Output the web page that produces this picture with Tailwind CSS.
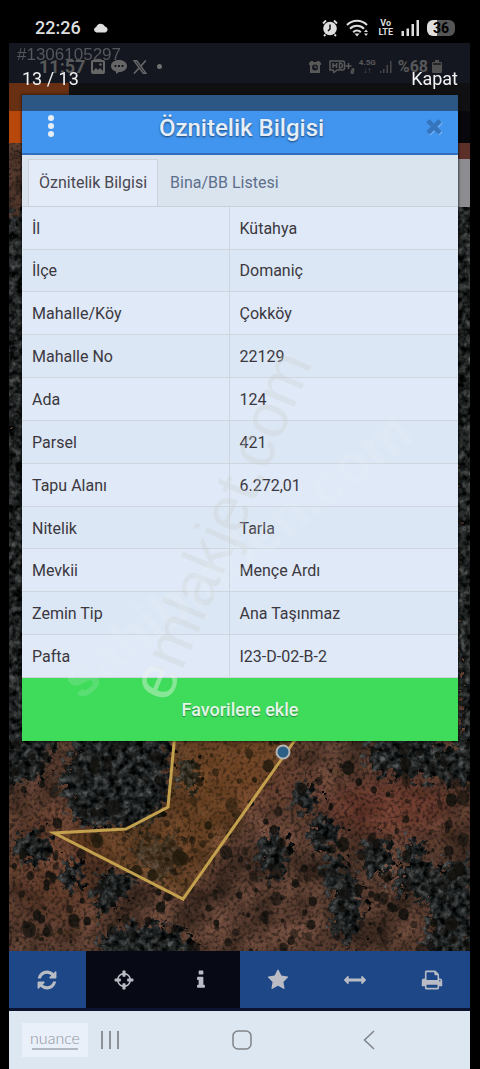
<!DOCTYPE html>
<html lang="tr">
<head>
  <meta charset="UTF-8" />
  <meta name="viewport" content="width=device-width, initial-scale=1.0"/>
  <title>Öznitelik Bilgisi</title>
  <script src="https://cdn.jsdelivr.net/npm/@tailwindcss/browser@4"></script>
</head>
<body class="bg-black min-h-screen flex flex-col font-[Roboto,sans-serif]">

  <!-- Durum çubuğu -->
  <header class="h-[43px] pt-3 pl-[35px] pr-[25px] flex items-center justify-between text-[#dedede]">
    <div class="flex items-center gap-3">
      <span class="text-lg leading-5 font-medium">22:26</span>
      <svg class="w-4 h-3" viewBox="0 0 16 12" fill="currentColor"><path d="M3.500 10.500a2.800 2.800 0 0 1-.3-5.500A4.700 4.700 0 0 1 12 4.500a3.100 3.100 0 0 1 .5 6z"/></svg>
    </div>
    <div class="flex items-center gap-2">
      <svg class="w-4 h-[18px]" viewBox="0 0 16 18"><circle cx="8" cy="9.500" r="6.800" fill="#dedede"/><path d="M1 4.500 4 1.500M15 4.500 12 1.500M3.500 15.500 2 17M12.500 15.500 14 17" stroke="#dedede" stroke-width="1.800" fill="none"/><path d="M8 5.500v4.500l-2 2" stroke="#111" stroke-width="1.500" fill="none"/></svg>
      <svg class="w-6 h-[18px]" viewBox="0 0 24 18" fill="none" stroke="#dedede" stroke-width="2"><path d="M1 6a14 14 0 0 1 20 0M4 9.800a9.800 9.800 0 0 1 14 0M7.200 13.200a5.300 5.300 0 0 1 7.600 0"/><path d="m8.500 14.500 2.500 3 2.500-3z" fill="#dedede" stroke="none"/><path d="m18 13 2-2.500 2 2.500zM18 14.500l2 2.500 2-2.500z" fill="#dedede" stroke="none"/></svg>
      <span class="text-[9px] leading-[9px] font-bold text-center">Vo<br>LTE</span>
      <svg class="w-[18px] h-[18px]" viewBox="0 0 18 18" fill="#dedede"><path d="M.500 12H3v5H.500zM5.500 9.500H8V17H5.500zM10.500 5H13v12h-2.500zM15.500 1H18v16h-2.500z"/></svg>
      <div class="w-7 h-4 rounded-md bg-gradient-to-r from-[#dedede] from-35% to-[#555] to-35% text-black text-sm leading-4 font-bold text-center">36</div>
    </div>
  </header>

  <main class="relative flex-1 flex flex-col ml-[9px] mr-[10px]">

    <!-- Alttaki ekranın durum çubuğu -->
    <div class="h-10 pt-[7px] pl-[30px] pr-7 flex items-center justify-between bg-[#101628] text-[#999]">
      <div class="flex items-center gap-[6px]">
        <span class="text-lg leading-5 font-bold">11:57</span>
        <svg class="w-[14px] h-[14px]" viewBox="0 0 14 14"><rect width="14" height="14" rx="2" fill="#b5b5b5"/><path d="m2 11 3-3 2 2 2-2 3 3V2H2z" fill="#161b2b"/><circle cx="9.500" cy="4.500" r="1.300" fill="#b5b5b5"/></svg>
        <svg class="w-4 h-[14px]" viewBox="0 0 16 14"><path d="M8 0c4.500 0 8 2.500 8 6s-3.500 6-8 6l-3 2v-2.500C2 10.700 0 8.800 0 6c0-3.500 3.500-6 8-6z" fill="#b5b5b5"/><path d="M3.500 5h2v2h-2zM7 5h2v2H7zM10.500 5h2v2h-2z" fill="#161b2b"/></svg>
        <svg class="w-[14px] h-[14px]" viewBox="0 0 14 14" fill="none" stroke="#b5b5b5"><path d="M1 .700h2.700L13 13.300h-2.700z" stroke-width="1.500"/><path d="M12.800.500 8 6M6 8l-5 5.500" stroke-width="1.700"/></svg>
        <span class="w-[5px] h-[5px] ml-1 rounded-full bg-[#c8c8c8]"></span>
      </div>
      <div class="flex items-center gap-1">
        <svg class="w-3 h-3" viewBox="0 0 12 12"><path d="M0 2 2 0h2v1h4V0h2l2 2v2h-1v8H1V4H0z" fill="#999"/><circle cx="6" cy="6.500" r="3" fill="#161b2b"/><path d="M6 4.500v2h2" stroke="#999" fill="none"/></svg>
        <svg class="w-[26px] h-[14px] ml-1" viewBox="0 0 26 14" fill="none" stroke="#999" stroke-width="1.500"><path d="M4 10H1V1h12.500q2 0 2 2v5q0 2-2 2H8l-3 2.500zM4 3v5M7.500 3v5M4 5.500h3.500M10.500 3v5h1.500q1.500-1 1.500-2.500T12 3zM16.500 6h6M19.500 3v6M22.500 9h2v2h-2v2h2.500"/></svg>
        <span class="text-[8px] leading-2 font-bold text-center">4.5G<br>↓↑</span>
        <svg class="w-3 h-3" viewBox="0 0 12 12" fill="#777"><path d="M0 10h1.500v2H0zM3 8h1.500v4H3zM6.500 4H8v8H6.500zM10 0h1.500v12H10z"/></svg>
        <span class="pl-[2px] text-base leading-5 font-bold">%68</span>
        <svg class="w-[10px] h-[13px]" viewBox="0 0 10 13" fill="#888"><path d="M3 0h4v2h2q1 0 1 1v9q0 1-1 1H1q-1 0-1-1V3q0-1 1-1h2z"/><path d="M1 3h8v2H1z" fill="#333"/></svg>
      </div>
    </div>

    <!-- Harita -->
    <section class="relative flex-1 bg-[#4b3226]">
      <svg class="absolute inset-0 w-full h-full" viewBox="0 0 461 868" preserveAspectRatio="xMidYMax slice">
        <defs>
          <filter id="soil" x="0" y="0" width="100%" height="100%" color-interpolation-filters="sRGB">
            <feTurbulence type="fractalNoise" baseFrequency="0.03" numOctaves="5" seed="4"/>
            <feColorMatrix values="0.45 0 0 0 0.12  0.3 0 0 0 0.085  0.25 0 0 0 0.06  0 0 0 0 1"/>
          </filter>
          <filter id="grain" x="0" y="0" width="100%" height="100%" color-interpolation-filters="sRGB">
            <feTurbulence type="fractalNoise" baseFrequency="0.28" numOctaves="2" seed="9"/>
            <feColorMatrix values="0 0 0 0 0.02  0 0 0 0 0.03  0 0 0 0 0.03  3.500 0 0 0 -1.600"/>
          </filter>
          <filter id="forest" x="-5%" y="-5%" width="110%" height="110%" color-interpolation-filters="sRGB">
            <feTurbulence type="fractalNoise" baseFrequency="0.14" numOctaves="3" seed="2" result="n"/>
            <feDisplacementMap in="SourceGraphic" in2="n" scale="36" xChannelSelector="R" yChannelSelector="G" result="shape"/>
            <feColorMatrix in="n" values="0.6 0 0 0 -0.16  0.6 0 0 0 -0.15  0.6 0 0 0 -0.15  0 0 0 0 1" result="leaf"/>
            <feComposite in="leaf" in2="shape" operator="in"/>
          </filter>
          <filter id="soft"><feGaussianBlur stdDeviation="12"/></filter>
        </defs>
        <rect width="461" height="868" filter="url(#soil)"/>
        <g filter="url(#soft)">
          <path d="M170 650h120L180 800 60 755l60-5 45-25z" fill="#784418" opacity=".35"/>
          <ellipse cx="380" cy="725" rx="65" ry="28" fill="#7c3a29" opacity=".5"/>
          <ellipse cx="50" cy="780" rx="50" ry="60" fill="#703c2a" opacity=".4"/>
          <ellipse cx="260" cy="700" rx="55" ry="30" fill="#78432d" opacity=".4"/>
        </g>
        <g filter="url(#forest)">
          <path d="M-10 130H40V630L0 700H-10zM70 650h90v60l-20 35-60 0-15-10-15-35zM0 655l50-5-20 45-40 10z"/>
          <path d="M90 788l30 0 10 10-15 18-15 14-18-5z"/>
          <path d="M92 850l30-10 50 5 20 30H92zM420 790l45-20v110h-50l5-40z"/>
          <path d="M435 80H480V720L450 700zM355 665l30-15 50 10 30 20v20l-60-5-45-5zM390 780l35 0 15 25-25 15-30-10z"/>
          <path d="M128 755l40-5 10 30-25 20-28-25z" opacity=".6"/>
          <ellipse cx="337" cy="826" rx="17" ry="34"/><ellipse cx="264" cy="771" rx="17" ry="22"/>
          <ellipse cx="325" cy="790" rx="12" ry="17"/><ellipse cx="368" cy="775" rx="17" ry="20"/>
          <ellipse cx="296" cy="715" rx="12" ry="16"/><ellipse cx="180" cy="690" rx="10" ry="18"/>
          <ellipse cx="24" cy="765" rx="20" ry="17"/><ellipse cx="64" cy="792" rx="12" ry="16"/>
          <ellipse cx="315" cy="750" rx="16" ry="18"/><ellipse cx="405" cy="770" rx="11" ry="17"/>
        </g>
        <g id="shrubs" fill="#15130f"></g>
        <rect width="461" height="868" filter="url(#grain)" opacity=".5"/>
        <path d="M169 640 159 724 117 746 45 750 174 816 292 650V640z" fill="#a86a10" fill-opacity=".12"/>
        <path d="M166 650 159 724 117 746 45 750 174 816 291 650" fill="none" stroke="#c3a04e" stroke-width="3"/>
        <circle cx="274" cy="669" r="6.500" fill="#2c5f86" stroke="#b5b5b5" stroke-width="2"/>
      </svg>

      <!-- Uygulama başlığı ve logo karesi -->
      <div class="absolute inset-x-0 top-0 h-[60px] bg-[#08080c]"></div>
      <div class="absolute left-0 top-0 w-[60px] h-[60px] bg-[#b8470c]"></div>
      <div class="absolute right-0 top-[60px] w-4 h-4 bg-[#5c3029]"></div>
      <div class="absolute right-0 top-[76px] w-4 h-12 bg-[#8d8c90]"></div>

      <!-- Öznitelik penceresi -->
      <div class="relative mt-3 ml-[13px] mr-3 bg-[#dfe9f6] shadow-[0_0_2px_1px_#0008] overflow-hidden">
        <div class="h-[60px] pt-1 px-5 flex items-center justify-between bg-[#4195ee] border-b-2 border-[#2f6fbd]">
          <button class="w-[18px] h-6 flex flex-col items-center justify-center gap-[2px]" aria-label="Menü">
            <span class="w-[6px] h-[6px] rounded-full bg-[#e8eef6]"></span>
            <span class="w-[6px] h-[6px] rounded-full bg-[#e8eef6]"></span>
            <span class="w-[6px] h-[6px] rounded-full bg-[#e8eef6]"></span>
          </button>
          <h1 class="pt-1 text-2xl leading-7 font-medium text-[#e6eef8] [text-shadow:0_1px_2px_#1c4272]">Öznitelik Bilgisi</h1>
          <button class="-mr-[7px]" aria-label="Pencereyi kapat">
            <svg class="w-[22px] h-[22px] drop-shadow-[1px_1px_0_#6fb0f5]" viewBox="0 0 1792 1792" fill="#3475bd"><path d="M1490 1322q0 40-28 68l-136 136q-28 28-68 28t-68-28l-294-294-294 294q-28 28-68 28t-68-28l-136-136q-28-28-28-68t28-68l294-294-294-294q-28-28-28-68t28-68l136-136q28-28 68-28t68 28l294 294 294-294q28-28 68-28t68 28l136 136q28 28 28 68t-28 68l-294 294 294 294q28 28 28 68z"/></svg>
          </button>
        </div>

        <div class="h-[52px] pt-1 pl-[6px] flex bg-[#dae4ef] border-b border-[#c8d0da] text-base" role="tablist">
          <button class="px-[10px] bg-[#e2ebf7] border-x border-t border-[#cdd4dd] text-[#4a4650]" role="tab" aria-selected="true">Öznitelik Bilgisi</button>
          <button class="px-3 text-[#5d6f8b]" role="tab" aria-selected="false">Bina/BB Listesi</button>
        </div>

        <table class="w-full h-[471px] text-base text-[#3b3840] text-left border-collapse">
          <tbody id="attributes"></tbody>
        </table>

        <button class="block w-full h-[63px] bg-[#3fdb5b] text-lg font-medium text-[#e2f5e6] [text-shadow:0_1px_1px_#2b8a40]">Favorilere ekle</button>

        <!-- Filigran -->
        <svg class="absolute inset-0 w-full h-full pointer-events-none font-['Liberation_Sans',Arial,sans-serif]" viewBox="0 0 436 646">
          <defs>
            <linearGradient id="fade" gradientUnits="userSpaceOnUse" x1="0" y1="0" x2="90" y2="0">
              <stop offset="0.300" stop-color="#f2f7f0" stop-opacity=".4"/>
              <stop offset="0.400" stop-color="#c9cdc9" stop-opacity=".3"/>
            </linearGradient>
          </defs>
          <text transform="translate(146 609) rotate(-67)" font-size="63" fill="url(#fade)">emlakjet.com</text>
          <text transform="translate(58 606) rotate(-38)" font-size="56" font-weight="bold" fill="#eef3fb" fill-opacity=".16">sahibinden.com</text>
        </svg>
      </div>
    </section>

    <!-- Alt araç çubuğu -->
    <div class="h-[60px] grid grid-cols-6 bg-[#1d4787] border-b-[3px] border-[#0b1430] text-[#b9bcc4]">
      <button class="flex items-center justify-center" aria-label="Yenile">
        <svg class="w-[22px] h-[22px]" viewBox="0 0 1792 1792" fill="currentColor"><path d="M1639 1056q0 5-1 7-64 268-268 434.500t-478 166.500q-146 0-282.500-55t-243.500-157l-129 129q-19 19-45 19t-45-19-19-45v-448q0-26 19-45t45-19h448q26 0 45 19t19 45-19 45l-137 137q71 66 161 102t187 36q134 0 250-65t186-179q11-17 53-117 8-23 30-23h192q13 0 22.500 9.500t9.500 22.500zm25-800v448q0 26-19 45t-45 19h-448q-26 0-45-19t-19-45 19-45l138-138q-148-137-349-137-134 0-250 65t-186 179q-11 17-53 117-8 23-30 23h-199q-13 0-22.500-9.500t-9.500-22.500v-7q65-268 270-434.500t480-166.500q146 0 284 55.500t245 156.500l130-129q19-19 45-19t45 19 19 45z"/></svg>
      </button>
      <button class="flex items-center justify-center bg-[#070a14]" aria-label="Konum">
        <svg class="w-[22px] h-[22px]" viewBox="0 0 1792 1792" fill="currentColor"><path d="M1325 1024h-109q-26 0-45-19t-19-45v-128q0-26 19-45t45-19h109q-32-108-112.500-188.500t-188.500-112.500v109q0 26-19 45t-45 19h-128q-26 0-45-19t-19-45v-109q-108 32-188.500 112.500t-112.500 188.500h109q26 0 45 19t19 45v128q0 26-19 45t-45 19h-109q32 108 112.500 188.500t188.500 112.500v-109q0-26 19-45t45-19h128q26 0 45 19t19 45v109q108-32 188.500-112.500t112.500-188.500zm339-192v128q0 26-19 45t-45 19h-143q-37 161-154.500 278.500t-278.500 154.500v143q0 26-19 45t-45 19h-128q-26 0-45-19t-19-45v-143q-161-37-278.500-154.500t-154.500-278.500h-143q-26 0-45-19t-19-45v-128q0-26 19-45t45-19h143q37-161 154.500-278.500t278.500-154.500v-143q0-26 19-45t45-19h128q26 0 45 19t19 45v143q161 37 278.500 154.500t154.500 278.500h143q26 0 45 19t19 45z"/></svg>
      </button>
      <button class="flex items-center justify-center bg-[#070a14]" aria-label="Bilgi">
        <svg class="w-[22px] h-[22px]" viewBox="0 0 1792 1792" fill="currentColor"><path d="M1216 1344v128q0 26-19 45t-45 19h-512q-26 0-45-19t-19-45v-128q0-26 19-45t45-19h64v-384h-64q-26 0-45-19t-19-45v-128q0-26 19-45t45-19h384q26 0 45 19t19 45v576h64q26 0 45 19t19 45zm-128-1152v192q0 26-19 45t-45 19h-256q-26 0-45-19t-19-45v-192q0-26 19-45t45-19h256q26 0 45 19t19 45z"/></svg>
      </button>
      <button class="flex items-center justify-center" aria-label="Favori">
        <svg class="w-[22px] h-[22px]" viewBox="0 0 1792 1792" fill="currentColor"><path d="M1728 647q0 22-26 48l-363 354 86 500q1 7 1 20 0 21-10.500 35.500t-30.500 14.500q-19 0-40-12l-449-236-449 236q-22 12-40 12-21 0-31.500-14.500t-10.500-35.500q0-6 2-20l86-500-364-354q-25-27-25-48 0-37 56-46l502-73 225-455q19-41 49-41t49 41l225 455 502 73q56 9 56 46z"/></svg>
      </button>
      <button class="flex items-center justify-center" aria-label="Ölçüm">
        <svg class="w-[22px] h-[22px]" viewBox="0 0 1792 1792" fill="currentColor"><path d="M1792 896q0 26-19 45l-256 256q-19 19-45 19t-45-19-19-45v-128h-1024v128q0 26-19 45t-45 19-45-19l-256-256q-19-19-19-45t19-45l256-256q19-19 45-19t45 19 19 45v128h1024v-128q0-26 19-45t45-19 45 19l256 256q19 19 19 45z"/></svg>
      </button>
      <button class="flex items-center justify-center" aria-label="Yazdır">
        <svg class="w-[22px] h-[22px]" viewBox="0 0 1792 1792" fill="currentColor"><path d="M448 1536h896v-256h-896v256zm0-640h896v-384h-160q-40 0-68-28t-28-68v-160h-640v640zm1152 64q0-26-19-45t-45-19-45 19-19 45 19 45 45 19 45-19 19-45zm128 0v416q0 13-9.500 22.500t-22.500 9.500h-224v160q0 40-28 68t-68 28h-960q-40 0-68-28t-28-68v-160h-224q-13 0-22.500-9.500t-9.500-22.500v-416q0-79 56.500-135.500t135.500-56.500h64v-544q0-40 28-68t68-28h672q40 0 88 20t76 48l152 152q28 28 48 76t20 88v256h64q79 0 135.500 56.500t56.500 135.500z"/></svg>
      </button>
    </div>

    <!-- Gezinme çubuğu -->
    <nav class="h-[58px] pl-[13px] pr-[95px] flex items-center justify-between bg-[#dce7f1]">
      <div class="flex items-center gap-3">
        <div class="w-[66px] h-[34px] flex flex-col items-center justify-center bg-[#eaf0f9] text-[#8f949c]">
          <span class="font-[Lato,sans-serif] font-light text-base leading-4">nuance</span>
          <span class="w-[46px] h-[2px] mt-[2px] bg-[#b3b8c0]"></span>
        </div>
        <button aria-label="Son uygulamalar">
          <svg class="w-5 h-5" viewBox="0 0 20 20" stroke="#808288" stroke-width="1.700"><path d="M2 1v18M10 1v18M18 1v18"/></svg>
        </button>
      </div>
      <button aria-label="Ana ekran">
        <svg class="w-5 h-5" viewBox="0 0 20 20" fill="none" stroke="#808288" stroke-width="1.500"><rect x="1" y="1" width="18" height="18" rx="5"/></svg>
      </button>
      <button aria-label="Geri">
        <svg class="w-3 h-5" viewBox="0 0 12 20" fill="none" stroke="#808288" stroke-width="1.500"><path d="M11 1 1.500 10 11 19"/></svg>
      </button>
    </nav>

    <!-- Galeri üst katmanı -->
    <div class="absolute inset-x-0 top-0 h-[68px] pl-[13px] pr-3 pt-[3px] flex items-center justify-between bg-[#181818]/50 text-lg text-[#f2f2f2]">
      <span>13 / 13</span>
      <button>Kapat</button>
    </div>
    <span class="absolute left-2 top-[2px] text-[17px] leading-5 text-[#55575c] font-['Liberation_Sans',Arial,sans-serif]">#1306105297</span>
  </main>

  <script>
    const attributes = [
      ['İl', 'Kütahya'],
      ['İlçe', 'Domaniç'],
      ['Mahalle/Köy', 'Çokköy'],
      ['Mahalle No', '22129'],
      ['Ada', '124'],
      ['Parsel', '421'],
      ['Tapu Alanı', '6.272,01'],
      ['Nitelik', 'Tarla'],
      ['Mevkii', 'Mençe Ardı'],
      ['Zemin Tip', 'Ana Taşınmaz'],
      ['Pafta', 'I23-D-02-B-2']
    ];

    document.getElementById('attributes').innerHTML = attributes.map(([ad, deger]) => `
      <tr class="border-b border-[#ced5dd] odd:bg-[#dfe9f7] even:bg-[#dce7f5]">
        <th scope="row" class="w-[207px] pt-[2px] pl-[10px] font-normal border-r border-[#ced5dd]">${ad}</th>
        <td class="pt-[2px] pl-[10px]">${deger}</td>
      </tr>
    `).join('');

    // Haritadaki çalılar, her açılışta aynı yerde
    let seed = 17;
    function rand() {
      seed = (seed * 16807) % 2147483647;
      return seed / 2147483647;
    }

    let shrubs = '';
    for (let i = 0; i < 330; i++) {
      const x = rand() * 461;
      const y = 655 + rand() * 213;
      const r = 1.5 + rand() * rand() * 6;
      shrubs += `<ellipse cx="${x.toFixed(1)}" cy="${y.toFixed(1)}" rx="${r.toFixed(1)}" ry="${(r * 1.2).toFixed(1)}" opacity="${(0.5 + rand() * 0.4).toFixed(2)}"/>`;
    }
    document.getElementById('shrubs').innerHTML = shrubs;
  </script>

</body>
</html>
